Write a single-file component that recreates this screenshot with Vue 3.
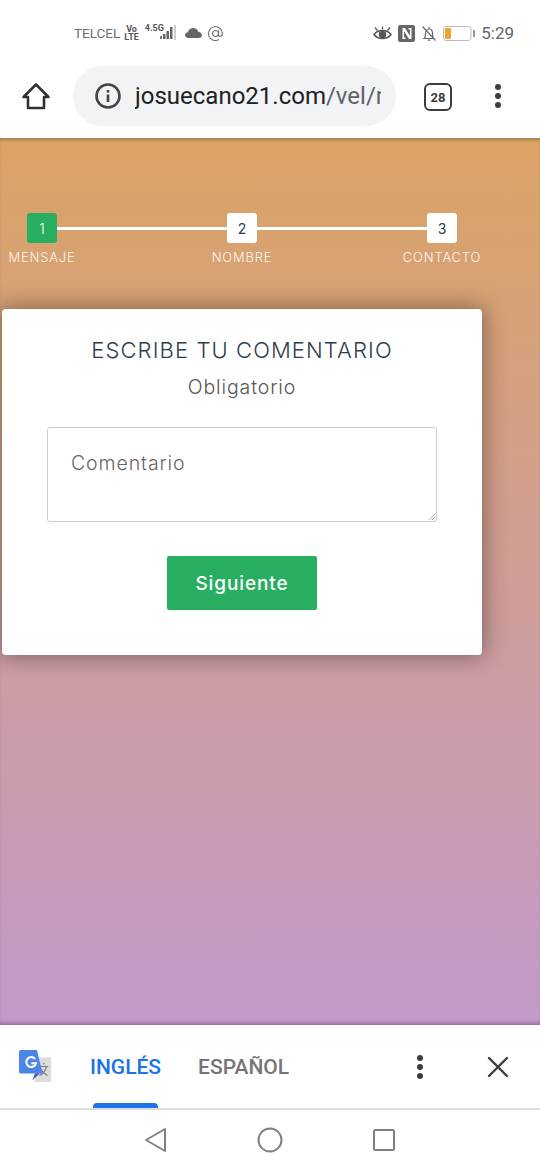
<script setup>
const steps = [
  { n: 1, label: 'MENSAJE', active: true },
  { n: 2, label: 'NOMBRE', active: false },
  { n: 3, label: 'CONTACTO', active: false },
]
</script>

<template>
  <div class="phone">
    <div class="status">
      <div class="status-left">
        <span class="carrier">TELCEL</span>
        <span class="volte">Vo<br />LTE</span>
        <span class="net">4.5G</span>
        <svg class="signal" width="26" height="18" viewBox="0 0 26 18">
          <rect x="6" y="12" width="2" height="3" fill="#777" />
          <rect x="9" y="10" width="2.500" height="5" fill="#666" />
          <rect x="12.500" y="7" width="2.500" height="8" fill="#666" />
          <rect x="16" y="3" width="2.500" height="12" fill="#666" />
          <rect x="20" y="1" width="2" height="15" fill="#ccc" />
        </svg>
        <svg class="cloud" width="17" height="10" viewBox="0 0 17 10">
          <path d="M3.500 10C1.500 10 0 8.700 0 7.100 0 5.600 1.200 4.500 2.800 4.300 3.400 1.800 5.500 0 8.100 0c2.500 0 4.500 1.500 5.200 3.800C15.400 4.100 17 5.500 17 7.200 17 8.800 15.600 10 13.800 10z" fill="#666" />
        </svg>
        <svg width="17" height="17" viewBox="0 0 17 17" fill="none" stroke="#777" stroke-width="1.200">
          <circle cx="8.500" cy="8.500" r="3" />
          <path d="M11.500 5.500v4.200c0 1 .7 1.600 1.500 1.600 1.300 0 2.400-1.200 2.400-2.800A7 7 0 1 0 12 14.600" />
        </svg>
      </div>
      <div class="status-right">
        <svg width="19" height="15" viewBox="0 0 19 15" fill="none" stroke="#555" stroke-width="1.500">
          <path d="M1 8.500c2-2.600 5-4 8.500-4s6.500 1.400 8.500 4c-2 2.600-5 4-8.500 4s-6.500-1.400-8.500-4z" />
          <circle cx="9.500" cy="8.500" r="3" fill="#555" />
          <path d="M2 1.500l2.500 3M17 1.500l-2.500 3M9.500 .5v3" stroke-width="1.200" />
        </svg>
        <svg width="17" height="17" viewBox="0 0 17 17">
          <rect width="17" height="17" rx="2" fill="#666" />
          <path d="M4.500 3h2.500l5 8V4.500H10.500V3H13.500v11H11l-5-8v6.500h1.500V14H4.500z" fill="#fff" />
        </svg>
        <svg width="16" height="17" viewBox="0 0 16 17" fill="none" stroke="#666" stroke-width="1.200">
          <path d="M2 13.500h11M3.500 13.500c1-1.500 1-3 1-5 0-2.500 1.500-4.500 3.500-4.500s3.500 1.800 3.500 4.500c0 2 .2 3.500 1 5M6.700 15.200h2.600M8 4V2M1.500 1.500l13 14" />
        </svg>
        <svg width="32" height="15" viewBox="0 0 32 15">
          <rect x=".5" y=".5" width="27.500" height="14" rx="2.500" fill="#fff" stroke="#bbb" />
          <rect x="2" y="2" width="6" height="11" rx="1" fill="#f5a02a" />
          <rect x="30" y="4" width="2" height="7" fill="#999" />
        </svg>
        <span class="time">5:29</span>
      </div>
    </div>

    <div class="toolbar">
      <svg class="home" width="30" height="30" viewBox="0 0 30 30" fill="none" stroke="#333" stroke-width="2.600" stroke-linejoin="round">
        <path d="M15 3.500L2.500 16H7v11h16V16h4.500z" />
      </svg>
      <div class="omnibox">
        <svg width="28" height="28" viewBox="0 0 28 28" fill="none">
          <circle cx="14" cy="14" r="11.500" stroke="#444" stroke-width="2.600" />
          <rect x="12.700" y="12.500" width="2.600" height="7.500" fill="#444" />
          <rect x="12.700" y="8" width="2.600" height="2.600" fill="#444" />
        </svg>
        <div class="url"><span class="host">josuecano21.com</span>/vel/r</div>
      </div>
      <div class="tabs">28</div>
      <div class="dots">
        <i></i><i></i><i></i>
      </div>
    </div>

    <div class="content">
      <div class="stepper">
        <div class="step-line"></div>
        <div v-for="s in steps" :key="s.n" class="step">
          <div class="step-num" :class="{ active: s.active }">{{ s.n }}</div>
          <div class="step-label">{{ s.label }}</div>
        </div>
      </div>

      <div class="card">
        <h2>ESCRIBE TU COMENTARIO</h2>
        <p class="required">Obligatorio</p>
        <div class="textarea">
          Comentario
          <svg class="grip" width="6" height="6" viewBox="0 0 6 6" stroke="#aaa" fill="none">
            <path d="M0 6l6-6M3 6l3-3" />
          </svg>
        </div>
        <button class="next">Siguiente</button>
      </div>
    </div>

    <div class="translate">
      <svg class="gt" width="34" height="34" viewBox="0 0 36 36">
        <path d="M14 8h19a1 1 0 0 1 1 1v24a1 1 0 0 1-1 1H17z" fill="#dcdcdc" />
        <path d="M27 14l-1.500 1.200M21 17.500h10M29 17.500c-1 4-4 8-7.500 9.500M23 20c1.500 3 4 5.500 7 7" stroke="#777" stroke-width="1.200" fill="none" />
        <path d="M2 0h17l6 25H2a2 2 0 0 1-2-2V2a2 2 0 0 1 2-2z" fill="#4a86e8" />
        <path d="M17 25l-3 7 8-7z" fill="#3a5fc8" />
        <path d="M17 9.500a5.200 5.200 0 1 0 1 4.500h-5" fill="none" stroke="#fff" stroke-width="2.200" />
      </svg>
      <div class="tab-on">INGLÉS</div>
      <div class="tab-off">ESPAÑOL</div>
      <div class="dots small">
        <i></i><i></i><i></i>
      </div>
      <svg class="close" width="22" height="22" viewBox="0 0 22 22" stroke="#3c3c3c" stroke-width="2.400" stroke-linecap="round">
        <path d="M2 2l18 18M20 2L2 20" />
      </svg>
    </div>

    <div class="navbar">
      <svg width="24" height="26" viewBox="0 0 24 26" fill="none" stroke="#808080" stroke-width="2" stroke-linejoin="round">
        <path d="M21 2v22L2 13z" />
      </svg>
      <svg width="26" height="26" viewBox="0 0 26 26" fill="none" stroke="#808080" stroke-width="2">
        <circle cx="13" cy="13" r="11.500" />
      </svg>
      <svg width="24" height="24" viewBox="0 0 24 24" fill="none" stroke="#808080" stroke-width="2">
        <rect x="2" y="2" width="20" height="20" rx="1.500" />
      </svg>
    </div>
  </div>
</template>

<style scoped>
.phone {
  width: 540px;
  height: 1170px;
  display: flex;
  flex-direction: column;
  background: #fff;
  overflow: hidden;
  font-family: Roboto, "Liberation Sans", sans-serif;
}

.status {
  height: 66px;
  flex: none;
  display: flex;
  justify-content: space-between;
  align-items: center;
  padding: 0 26px 0 74px;
  color: #666;
}

.status-left,
.status-right {
  display: flex;
  align-items: center;
}

.status-right {
  gap: 6px;
}

.carrier {
  font-size: 13.500px;
  color: #6e6e6e;
}

.volte {
  font-size: 9px;
  line-height: 8px;
  font-weight: 700;
  margin-left: 4px;
  color: #555;
  text-align: center;
}

.net {
  font-size: 9px;
  font-weight: 700;
  margin: -10px 0 0 6px;
  color: #555;
}

.signal {
  margin-left: -10px;
}

.cloud {
  margin-left: 5px;
  margin-right: 5px;
}

.time {
  font-size: 17px;
  color: #666;
}

.toolbar {
  height: 72px;
  flex: none;
  display: flex;
  align-items: flex-start;
  padding-left: 21px;
}

.home {
  margin-top: 15px;
}

.omnibox {
  width: 323px;
  height: 60px;
  margin-left: 22px;
  padding-left: 21px;
  box-sizing: border-box;
  border-radius: 30px;
  background: #f1f3f4;
  display: flex;
  align-items: center;
  gap: 13px;
  overflow: hidden;
}

.url {
  width: 246px;
  overflow: hidden;
  white-space: nowrap;
  font-size: 24px;
  color: #5f6368;
}

.host {
  color: #202124;
}

.tabs {
  width: 28px;
  height: 28px;
  box-sizing: border-box;
  margin: 17px 0 0 28px;
  border: 2.500px solid #3c3c3c;
  border-radius: 6px;
  display: flex;
  align-items: center;
  justify-content: center;
  font-size: 13px;
  font-weight: 700;
  color: #3c3c3c;
}

.dots {
  margin: 18px 0 0 43px;
  display: flex;
  flex-direction: column;
  gap: 3px;
}

.dots i {
  width: 6px;
  height: 6px;
  border-radius: 50%;
  background: #3c3c3c;
}

.content {
  height: 887px;
  flex: none;
  box-sizing: border-box;
  background: linear-gradient(#dba364, #c399ca);
  box-shadow: inset 0 4px 3px -2px rgba(0, 0, 0, 0.22), inset 0 -5px 4px -3px rgba(0, 0, 0, 0.28);
  padding-top: 75px;
}

.stepper {
  position: relative;
  width: 484px;
  display: flex;
  justify-content: space-between;
  font-family: Inter, "Liberation Sans", sans-serif;
}

.step-line {
  position: absolute;
  left: 42px;
  right: 42px;
  top: 14px;
  height: 3px;
  background: #fff;
}

.step {
  position: relative;
  width: 84px;
  display: flex;
  flex-direction: column;
  align-items: center;
}

.step-num {
  width: 30px;
  height: 30px;
  border-radius: 3px;
  background: #fff;
  color: #2c3e50;
  font-size: 14px;
  display: flex;
  align-items: center;
  justify-content: center;
}

.step-num.active {
  background: #27ae60;
  color: #fff;
  font-weight: 300;
}

.step-label {
  margin-top: 6px;
  font-size: 13px;
  line-height: 16px;
  letter-spacing: 0.8px;
  font-weight: 300;
  color: #fff;
  opacity: 0.9;
  white-space: nowrap;
}

.card {
  width: 480px;
  height: 346px;
  box-sizing: border-box;
  margin: 44px 0 0 2px;
  background: #fff;
  border-radius: 4px;
  box-shadow: 0 0 22px 2px rgba(0, 0, 0, 0.38);
  padding-top: 28px;
  display: flex;
  flex-direction: column;
  align-items: center;
  font-family: Inter, "Liberation Sans", sans-serif;
}

h2 {
  margin: 0;
  font-size: 22px;
  line-height: 26px;
  font-weight: 300;
  letter-spacing: 1.100px;
  color: #2c3e50;
}

.required {
  margin: 12px 0 0;
  font-size: 19.500px;
  line-height: 24px;
  font-weight: 300;
  letter-spacing: 0.9px;
  color: #555;
}

.textarea {
  position: relative;
  width: 390px;
  height: 95px;
  box-sizing: border-box;
  margin-top: 28px;
  padding: 23px 0 0 23px;
  border: 1.500px solid #ccc;
  border-radius: 3px;
  font-size: 19.500px;
  line-height: 24px;
  font-weight: 300;
  letter-spacing: 0.9px;
  color: #666;
}

.grip {
  position: absolute;
  right: 1px;
  bottom: 1px;
}

.next {
  width: 150px;
  height: 54px;
  margin-top: 34px;
  border: none;
  border-radius: 2px;
  background: #27ae60;
  color: #fff;
  font-family: inherit;
  font-size: 19px;
  font-weight: 500;
  letter-spacing: 0.9px;
}

.translate {
  position: relative;
  height: 85px;
  flex: none;
  box-sizing: border-box;
  border-bottom: 2px solid #ddd;
  display: flex;
  align-items: center;
  font-size: 21px;
  font-weight: 500;
}

.gt {
  position: absolute;
  left: 19px;
  top: 25px;
}

.tab-on {
  position: relative;
  margin-left: 90px;
  color: #1a73e8;
}

.tab-on::after {
  content: "";
  position: absolute;
  left: 3px;
  right: 3px;
  top: 48px;
  height: 5px;
  border-radius: 4px 4px 0 0;
  background: #1a73e8;
}

.tab-off {
  margin-left: 37px;
  color: #757575;
}

.dots.small {
  margin: 0 0 0 128px;
  gap: 3px;
}

.close {
  margin-left: 64px;
}

.navbar {
  flex: 1;
  display: flex;
  align-items: center;
  padding: 0 144px;
  justify-content: space-between;
}
</style>

<style>
html,
body {
  margin: 0;
}
</style>
